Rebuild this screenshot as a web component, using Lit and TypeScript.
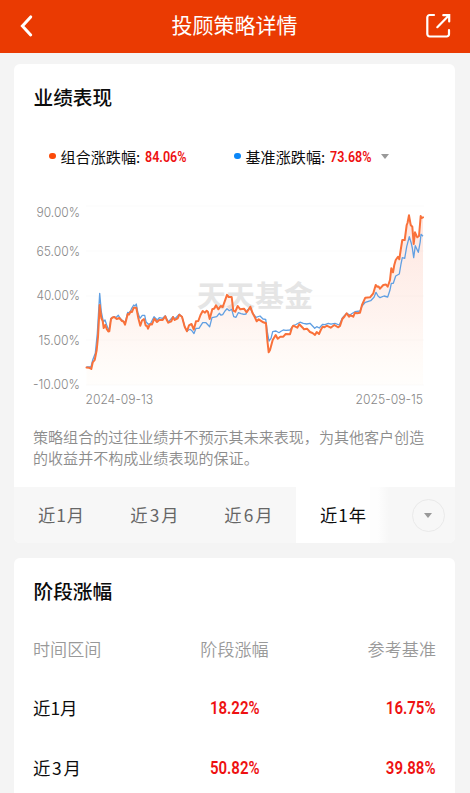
import { LitElement, html, svg, css } from "lit";
import { customElement, property, state } from "lit/decorators.js";
import { classMap } from "lit/directives/class-map.js";

const PORTFOLIO =
  "86.5,367.5 89,367.7 91.3,369 92.7,362.5 94.7,360 96.7,350 98,337 99.7,305 101.3,318 102.7,321 103.7,328 105.3,325 106.7,329 108.3,331.5 109.3,331.3 111,319 112.5,317.5 114.3,317 116.7,319 119.3,318 122,321 123.6,321.5 125,324.7 127.7,314 129,314.5 130.7,311.5 132,312 133.7,307.7 136.3,307.7 138.3,318 140.3,325.7 142,320.5 144,319 145.7,325.5 147,326 148,328.7 149.3,325.5 150.7,324 152,324.5 154.3,318.7 157,322 159.3,320 162.7,320 165.3,316.3 166.5,319.5 168.3,322.7 171.3,321.3 173,317 174.7,320 177.7,318.3 179.3,314.7 182,316.7 184.7,326.7 187,331.3 189,325.3 191.5,324 193.8,329.5 196,321.3 198.3,321 200.5,315 202.7,311 205,312.7 206.7,310.7 208,312 209.7,319 212.3,309.3 214.3,308.5 216,305.3 218.3,309.3 220.7,306 222.7,307 225,300.7 227,294.9 228.7,297 231.7,297 233.3,310.7 235.3,311.7 237.7,306 240.3,309.3 244,308.7 246.7,312.3 248.3,310 250.3,306.7 252.7,313.3 255,317.5 256.7,321.3 258.7,319.3 263.3,322.3 266,323.3 267.3,340 268.7,352.3 270,350 272.7,340 275.7,335 277.7,338.8 280.3,336.7 283.3,336.7 285.7,334 290,334.3 292,327.5 293.3,325.7 297.3,327.7 299.3,324.3 302.7,327.7 304,329.3 307,328.7 310,332 312.5,333 315,335 316.7,332 319,334 321,329.5 322.7,326.7 324.5,327.3 326.7,325.7 330.7,327.7 334.3,325 338.3,327.3 340,326 342.3,319 344.5,316.5 346.7,313.3 349,316.7 350.5,315.3 353.3,316.7 355,312.7 357,313.3 360,312.7 362,305 365.3,297.7 370,297.3 373.3,293.3 375.7,285 377.3,286.7 378.6,286.5 380,288.7 383.3,285 386,284.5 387.7,286.7 390,280 391.3,268.3 393,272.3 394.3,265 395.7,260 398,256.7 399.3,259.3 400.7,250 402.3,240 404.7,240 406.7,225 407.5,223 409,215.3 410.7,225 412.3,226.7 413.7,244 415,232.3 417.3,237.3 419,236 420.7,216 421.5,218 423,217.3";

const BENCHMARK =
  "86.5,367 91,367 92.7,360 95.3,353.3 97.3,333.3 99.7,293.3 101.3,311.7 103.3,321.7 105,320 106.7,325 109,331 111,318.3 114.3,316.7 116,317.5 118.3,315.3 120.7,319 122.5,320.5 125,323.3 127.7,312.3 129,313 130.7,310.7 131.7,308.3 133.7,305 135,306 136.3,304 138,313.3 140,318.3 142.3,315.3 144.7,315.3 146,321.7 148.3,324.3 150.7,323.3 154,316.7 157.3,320 159.3,317.7 162.7,318.3 165.3,315.7 168.3,322 173,316.7 174.7,319 179.3,314.3 182,316.7 184.7,326.7 187,331 190,329.3 192,330.8 194,333.5 196,328.3 199,328.3 202.7,322.7 206,322.7 209.7,326.7 212,317.7 216.7,316.7 219.3,313.3 221,315.2 222.7,314.7 225,311 227,308.7 229.3,310.7 231.7,309.3 233.7,316.7 236,317.3 238.3,312.7 241,313.6 244,314.3 246,314 247.3,310 250.3,308.3 252.7,313.3 256,317.3 260,316 263,319 265.7,319.3 267.3,331.7 269,341 271,338.3 272.7,331.7 276,331 279,332.7 281,331.3 283.3,330 286,330.3 290,330 293.3,325.7 296,324.5 300,322.2 303.3,323.3 306.7,324 310,323.3 314.7,328.3 316.7,326.7 319.3,328 322.7,324.3 325,324.6 328.3,323.3 331,324.1 335,323.3 339.3,325 342.3,318 346.7,313.3 350,315 352,313.5 355,311.7 360,311 362,306 365.3,302.3 370.7,300.7 374,297.3 376,292.3 378,296 380,297.7 384,296 387.7,297 390,290 391.3,283.3 393.3,283.3 395.7,276 399.3,274 401,264 402.3,257.7 404.7,258.3 406.7,246.7 409.3,236.7 411.3,243.3 412.3,248 413.7,257.7 415.3,245.7 418.3,252.3 420.2,242 421,234.3 423,236.3";

@customElement("red-rate")
export class RedRate extends LitElement {
  @property() value = "";
  static styles = css`
    :host {
      display: inline-block;
      color: #ee1111;
      font-family: Roboto, "Liberation Sans", sans-serif;
      font-weight: 600;
      transform: scaleX(var(--rate-scale, 0.86));
      transform-origin: var(--rate-origin, left) center;
      white-space: nowrap;
    }
  `;
  render() {
    return html`${this.value}`;
  }
}

@customElement("yield-chart")
export class YieldChart extends LitElement {
  static styles = css`
    :host { display: block; }
    svg { display: block; width: 440px; height: 220px; }
    .label { font: 300 13.3px Inter, "Noto Sans CJK SC", sans-serif; fill: #888; }
    .mark { font: 700 29px "Noto Sans CJK SC", sans-serif; fill: #e5e5e5; }
    .grid { stroke: #fbfbfb; }
    .portfolio { fill: none; stroke: #f9713a; stroke-width: 2; stroke-linejoin: round; stroke-linecap: round; }
    .benchmark { fill: none; stroke: #609fe2; stroke-width: 1.3; stroke-linejoin: round; }
  `;
  render() {
    const ticks: [string, number, number, number][] = [
      ["90.00%", 36.5, 216.5, 43.5],
      ["65.00%", 36.5, 255.6, 43.5],
      ["40.00%", 36.5, 300.4, 43.5],
      ["15.00%", 38.5, 345, 41.5],
      ["-10.00%", 33, 389.4, 47],
    ];
    return html`<svg viewBox="14 190 440 220">
      <defs>
        <linearGradient id="fade" gradientUnits="userSpaceOnUse" x1="0" y1="215" x2="0" y2="385">
          <stop offset="0" stop-color="#f95f38" stop-opacity="0.16" />
          <stop offset="0.6" stop-color="#fb7d50" stop-opacity="0.09" />
          <stop offset="1" stop-color="#ffcf90" stop-opacity="0.03" />
        </linearGradient>
      </defs>
      ${[206, 251, 296, 340, 385].map((y) => svg`<line class="grid" x1="86" x2="424" y1=${y} y2=${y} />`)}
      <text class="mark" x="197" y="306.5" textLength="116">天天基金</text>
      <polygon points="86.5,385 ${PORTFOLIO} 423,385" fill="url(#fade)" />
      <polyline class="benchmark" points=${BENCHMARK} />
      <polyline class="portfolio" points=${PORTFOLIO} />
      ${ticks.map(
        ([t, x, y, w]) =>
          svg`<text class="label" x=${x} y=${y} textLength=${w} lengthAdjust="spacingAndGlyphs">${t}</text>`
      )}
      <text class="label" x="85.5" y="403.7" textLength="67.5" lengthAdjust="spacingAndGlyphs">2024-09-13</text>
      <text class="label" x="355.5" y="403.7" textLength="67.5" lengthAdjust="spacingAndGlyphs">2025-09-15</text>
    </svg>`;
  }
}

@customElement("app-root")
export class AppRoot extends LitElement {
  @state() private active = "近1年";

  static styles = css`
    :host {
      display: flex;
      flex-direction: column;
      height: 793px;
      overflow: hidden;
      background: #f4f4f4;
      color: #0c0c0c;
      font-family: "Noto Sans CJK SC", sans-serif;
    }
    * { box-sizing: border-box; }
    .bar {
      flex: none;
      height: 53px;
      padding: 0 18px 2px 19px;
      display: grid;
      grid-template-columns: 28px 1fr 28px;
      align-items: center;
      background: #ea3a02;
      color: #fff;
    }
    .bar svg { display: block; fill: none; stroke: #fff; }
    .title { text-align: center; font-size: 21px; line-height: 28px; padding: 0 2px 3px 0; }
    .share { justify-self: end; }
    .card {
      flex: none;
      margin: 11px 15.5px 0 14px;
      border-radius: 6px;
      background: #fff;
      overflow: hidden;
    }
    .card + .card { margin-top: 15px; height: 250px; }
    h2 { margin: 0; padding: 18px 19px 0 19.5px; font-size: 19.7px; line-height: 30px; font-weight: 500; }
    .legend {
      display: flex;
      align-items: center;
      height: 24px;
      margin-top: 32px;
      padding-left: 35px;
      font-size: 15.1px;
    }
    .item { display: flex; align-items: center; width: 185px; white-space: nowrap; }
    .dot { width: 6.5px; height: 6.5px; border-radius: 50%; background: #fb4a09; margin-right: 5px; }
    .dot.blue { background: #0b87f8; }
    .item red-rate { margin-left: 4.8px; padding-top: 2px; width: 51.5px; font-size: 14.6px; }
    .caret { width: 0; height: 0; border: 4.5px solid transparent; border-top: 5px solid #999; border-bottom: 0; }
    yield-chart { margin-top: 22px; }
    .note {
      margin: 16px 18px 19px 19px;
      font-size: 15.05px;
      line-height: 21px;
      font-weight: 350;
      color: #8c8c8c;
      white-space: nowrap;
    }
    .tabs {
      display: grid;
      grid-template-columns: 94px 94px 94px 93px 1fr;
      height: 56px;
      background: #f7f7f7;
      font-size: 17.3px;
      color: #666;
    }
    .tab { display: flex; align-items: center; justify-content: center; letter-spacing: 0.9px; padding: 0 0 2px 1px; }
    .tab.wide { letter-spacing: 2.1px; }
    .tab.active {
      color: #0c0c0c;
      padding-left: 2px;
      background: linear-gradient(to right, #fff 0 79%, #fdfdfd 80% 88%, #f7f7f7 100%);
    }
    .more { display: flex; align-items: center; justify-content: center; padding-left: 13px; }
    .ring {
      width: 33px;
      height: 33px;
      border: 1px solid #e9e9e9;
      border-radius: 50%;
      display: flex;
      align-items: center;
      justify-content: center;
    }
    .row {
      display: grid;
      grid-template-columns: 1fr 1fr 1fr;
      align-items: center;
      height: 60px;
      padding: 0 18.5px 0 19px;
      font-size: 17.4px;
    }
    .card + .card h2 { padding-top: 18px; }
    .row.head { height: 58px; margin-top: 13px; font-size: 17.1px; font-weight: 350; color: #999; }
    .row > :nth-child(2) { justify-self: center; --rate-origin: center; }
    .row > :nth-child(3) { justify-self: end; --rate-origin: right; }
    .row red-rate { font-size: 18px; --rate-scale: 0.835; padding-top: 1px; }
    .row .wide { letter-spacing: 1.7px; }
  `;

  private tab(name: string) {
    const classes = { tab: true, active: name === this.active, wide: /[36]/.test(name) };
    return html`<div class=${classMap(classes)} @click=${() => (this.active = name)}>${name}</div>`;
  }

  render() {
    return html`
      <header class="bar">
        <svg width="16" height="26" viewBox="0 0 16 26" stroke-width="3">
          <path d="M11.7 3.9 3.4 13l8.3 9" stroke-linecap="round" stroke-linejoin="miter" />
        </svg>
        <div class="title">投顾策略详情</div>
        <svg class="share" width="28" height="28" viewBox="0 0 28 28" stroke-width="2.2">
          <path d="M10 3H5.7a2.4 2.4 0 0 0-2.4 2.4v16.7a2.4 2.4 0 0 0 2.4 2.4h17a2.3 2.3 0 0 0 2.3-2.3v-4" stroke-linecap="round" />
          <path d="M19.3 3.2h5.9v6.2M24.8 3.6 13.3 15.2" stroke-linecap="round" stroke-linejoin="miter" />
        </svg>
      </header>
      <section class="card">
        <h2>业绩表现</h2>
        <div class="legend">
          <div class="item"><i class="dot"></i>组合涨跌幅:<red-rate value="84.06%"></red-rate></div>
          <div class="item"><i class="dot blue"></i>基准涨跌幅:<red-rate value="73.68%"></red-rate><i class="caret"></i></div>
        </div>
        <yield-chart></yield-chart>
        <div class="note">策略组合的过往业绩并不预示其未来表现，为其他客户创造<br />的收益并不构成业绩表现的保证。</div>
        <nav class="tabs">
          ${["近1月", "近3月", "近6月", "近1年"].map((t) => this.tab(t))}
          <div class="more"><div class="ring"><i class="caret"></i></div></div>
        </nav>
      </section>
      <section class="card">
        <h2>阶段涨幅</h2>
        <div class="row head"><span>时间区间</span><span>阶段涨幅</span><span>参考基准</span></div>
        <div class="row"><span>近1月</span><red-rate value="18.22%"></red-rate><red-rate value="16.75%"></red-rate></div>
        <div class="row"><span class="wide">近3月</span><red-rate value="50.82%"></red-rate><red-rate value="39.88%"></red-rate></div>
      </section>
    `;
  }
}
